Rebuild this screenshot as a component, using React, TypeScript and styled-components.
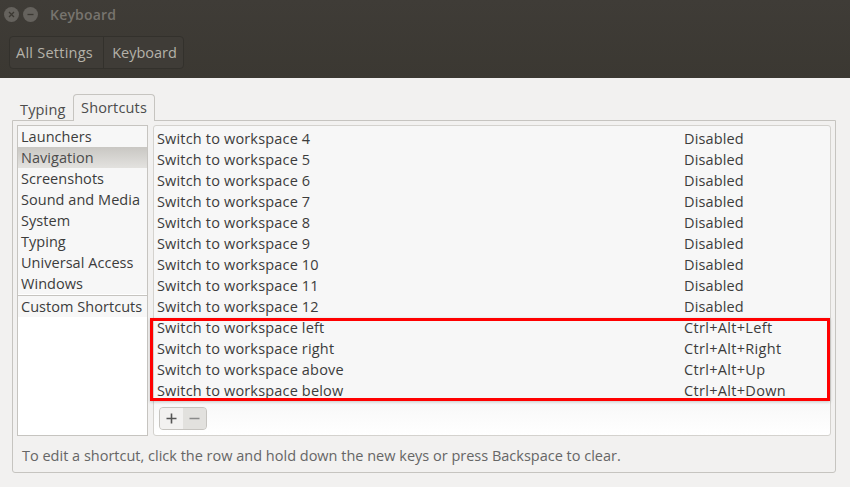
import React from "react";
import styled, { createGlobalStyle } from "styled-components";

const Global = createGlobalStyle`
  html, body { margin: 0; padding: 0; background: #f2f1f0; }
  body { font-family: "Open Sans", "Noto Sans", "Liberation Sans", sans-serif; font-size: 14px; color: #3c3c3c; }
`;
const Page = styled.div`
  width: 850px; height: 487px; overflow: hidden; display: flex; flex-direction: column; background: #f2f1f0;
`;
const Header = styled.header`
  height: 78px; flex: none; box-sizing: border-box; padding: 0 0 0 4px;
  background: linear-gradient(#3f3c37, #3b3832); display: flex; flex-direction: column;
`;
const TitleRow = styled.div`
  height: 29px; display: flex; align-items: center; gap: 4px; flex: none;
`;
const WinBtn = styled.span`
  width: 15px; height: 15px; border-radius: 50%; background: #65625d; display: flex; align-items: center; justify-content: center;
`;
const Title = styled.span`
  margin-left: 8px; font-size: 14px; font-weight: 600; color: #77746e; letter-spacing: 0.2px;
`;
const Crumbs = styled.div`
  margin: 7px 0 0 5px; width: 175px; height: 33px; box-sizing: border-box; display: flex;
  border: 1px solid #33312c; border-radius: 4px; background: #3f3c37;
`;
const Crumb = styled.span<{ $w: number; $track?: number; $left?: number; $right?: number }>`
  width: ${(p) => p.$w}px; box-sizing: border-box; display: flex; align-items: center; justify-content: center; color: #b5b2a9; font-size: 14.5px;
  letter-spacing: ${(p) => p.$track ?? 0}px;
  padding: 0 ${(p) => p.$right ?? 0}px 0 ${(p) => p.$left ?? 0}px;
  & + & { border-left: 1px solid #33312c; }
`;
const Body = styled.div`
  flex: 1; min-height: 0; display: flex; flex-direction: column; padding: 16px 14px 14px 12px;
`;
const Tabs = styled.div`
  height: 26px; display: flex; align-items: flex-end; padding-left: 1px; flex: none;
`;
const Tab = styled.span<{ $active?: boolean }>`
  box-sizing: border-box; display: flex; align-items: center; font-size: 14.5px; color: #4c4c4c; position: relative; z-index: 1;
  letter-spacing: 0.15px;
  ${(p) =>
    p.$active
      ? `height:27px; width:82px; padding-bottom:1px; justify-content:center; background:#f2f1f0; border:1px solid #c6c4c0; border-bottom:none; border-radius:4px 4px 0 0; margin-bottom:-1px;`
      : `height:25px; width:60px; padding:3px 0 0 7px;`}
`;
const Frame = styled.div`
  flex: 1; min-height: 0; box-sizing: border-box; border: 1px solid #c6c4c0; border-radius: 0 0 3px 3px; padding: 4px 4px 0; display: flex; flex-direction: column;
`;
const Panes = styled.div`
  display: flex; gap: 5px; height: 311px; flex: none;
`;
const Side = styled.ul`
  margin: 0; padding: 0; list-style: none; width: 131px; box-sizing: border-box; background: #fff; border: 1px solid #c6c4c0; flex: none;
`;
const SideItem = styled.li<{ $sel?: boolean; $custom?: boolean }>`
  height: 21px; line-height: 21px; padding-left: 3px; font-size: 14.5px; white-space: nowrap; color: ${(p) => (p.$sel ? "#4c4c4c" : "#3c3c3c")};
  letter-spacing: 0.04px;
  background: ${(p) => (p.$sel ? "linear-gradient(#c9c7c3, #e3e2df)" : "#f7f7f7")};
  ${(p) => p.$custom && `border-top:1px solid #c6c4c0; margin-top:1px;`}
`;
const Main = styled.div`
  flex: 1; min-width: 0; box-sizing: border-box; border: 1px solid #d4d2ce; border-radius: 3px; background: linear-gradient(#f7f7f7 0, #f7f7f7 88%, #ffffff 100%);
  padding-top: 2px; position: relative; display: flex; flex-direction: column;
`;
const Row = styled.div`
  height: 21px; display: flex; align-items: center; padding-left: 3px; font-size: 14.5px; white-space: nowrap; flex: none;
`;
const RowName = styled.span` width: 527px; flex: none; letter-spacing: 0.17px; `;
const RowKeys = styled.span<{ $chord: boolean }>` letter-spacing: ${(p) => (p.$chord ? 0.32 : 0.15)}px; `;
const Highlight = styled.div`
  position: absolute; left: -4px; top: 192px; width: 680px; height: 83px; box-sizing: border-box; border: 3px solid #f00; box-shadow: 0 1px 3px rgba(0,0,0,.2); pointer-events: none;
`;
const ToolGroup = styled.div`
  margin: 6px 0 0 5px; width: 48px; height: 23px; box-sizing: border-box; display: flex; border: 1px solid #c6c4c0; border-radius: 4px; overflow: hidden; background: #e2e1de;
`;
const ToolBtn = styled.span<{ $off?: boolean }>`
  width: 23px; display: flex; align-items: center; justify-content: center; background: ${(p) => (p.$off ? "#e2e1de" : "#f2f1f0")};
`;
const Hint = styled.div`
  height: 36px; box-sizing: border-box; padding: 2px 0 0 5px; display: flex; align-items: center; font-size: 14.5px; color: #666; white-space: nowrap;
`;

const rows: [string, string][] = [
  ["Switch to workspace 4", "Disabled"],
  ["Switch to workspace 5", "Disabled"],
  ["Switch to workspace 6", "Disabled"],
  ["Switch to workspace 7", "Disabled"],
  ["Switch to workspace 8", "Disabled"],
  ["Switch to workspace 9", "Disabled"],
  ["Switch to workspace 10", "Disabled"],
  ["Switch to workspace 11", "Disabled"],
  ["Switch to workspace 12", "Disabled"],
  ["Switch to workspace left", "Ctrl+Alt+Left"],
  ["Switch to workspace right", "Ctrl+Alt+Right"],
  ["Switch to workspace above", "Ctrl+Alt+Up"],
  ["Switch to workspace below", "Ctrl+Alt+Down"],
];
const cats = ["Launchers", "Navigation", "Screenshots", "Sound and Media", "System", "Typing", "Universal Access", "Windows"];

export default function App() {
  return (
    <Page>
      <Global />
      <Header>
        <TitleRow>
          <WinBtn>
            <svg width="9" height="9" viewBox="0 0 9 9"><path d="M2 2l5 5M7 2l-5 5" stroke="#3b3832" strokeWidth="1.3" /></svg>
          </WinBtn>
          <WinBtn>
            <svg width="9" height="9" viewBox="0 0 9 9"><path d="M1.5 4.5h6" stroke="#3b3832" strokeWidth="1.3" /></svg>
          </WinBtn>
          <Title>Keyboard</Title>
        </TitleRow>
        <Crumbs>
          <Crumb $w={93} $track={0.25} $right={4}>All Settings</Crumb>
          <Crumb $w={80} $left={2}>Keyboard</Crumb>
        </Crumbs>
      </Header>
      <Body>
        <Tabs>
          <Tab>Typing</Tab>
          <Tab $active>Shortcuts</Tab>
        </Tabs>
        <Frame>
          <Panes>
            <Side>
              {cats.map((c) => (
                <SideItem key={c} $sel={c === "Navigation"}>{c}</SideItem>
              ))}
              <SideItem $custom>Custom Shortcuts</SideItem>
            </Side>
            <Main>
              {rows.map(([a, b]) => (
                <Row key={a}>
                  <RowName>{a}</RowName>
                  <RowKeys $chord={b !== "Disabled"}>{b}</RowKeys>
                </Row>
              ))}
              <Highlight />
              <ToolGroup>
                <ToolBtn>
                  <svg width="11" height="11" viewBox="0 0 11 11"><path d="M5.5 0.5v10M0.5 5.5h10" stroke="#555" strokeWidth="1.6" /></svg>
                </ToolBtn>
                <ToolBtn $off>
                  <svg width="11" height="11" viewBox="0 0 11 11"><path d="M0.5 5.5h10" stroke="#8a8a8a" strokeWidth="1.6" /></svg>
                </ToolBtn>
              </ToolGroup>
            </Main>
          </Panes>
          <Hint>To edit a shortcut, click the row and hold down the new keys or press Backspace to clear.</Hint>
        </Frame>
      </Body>
    </Page>
  );
}
